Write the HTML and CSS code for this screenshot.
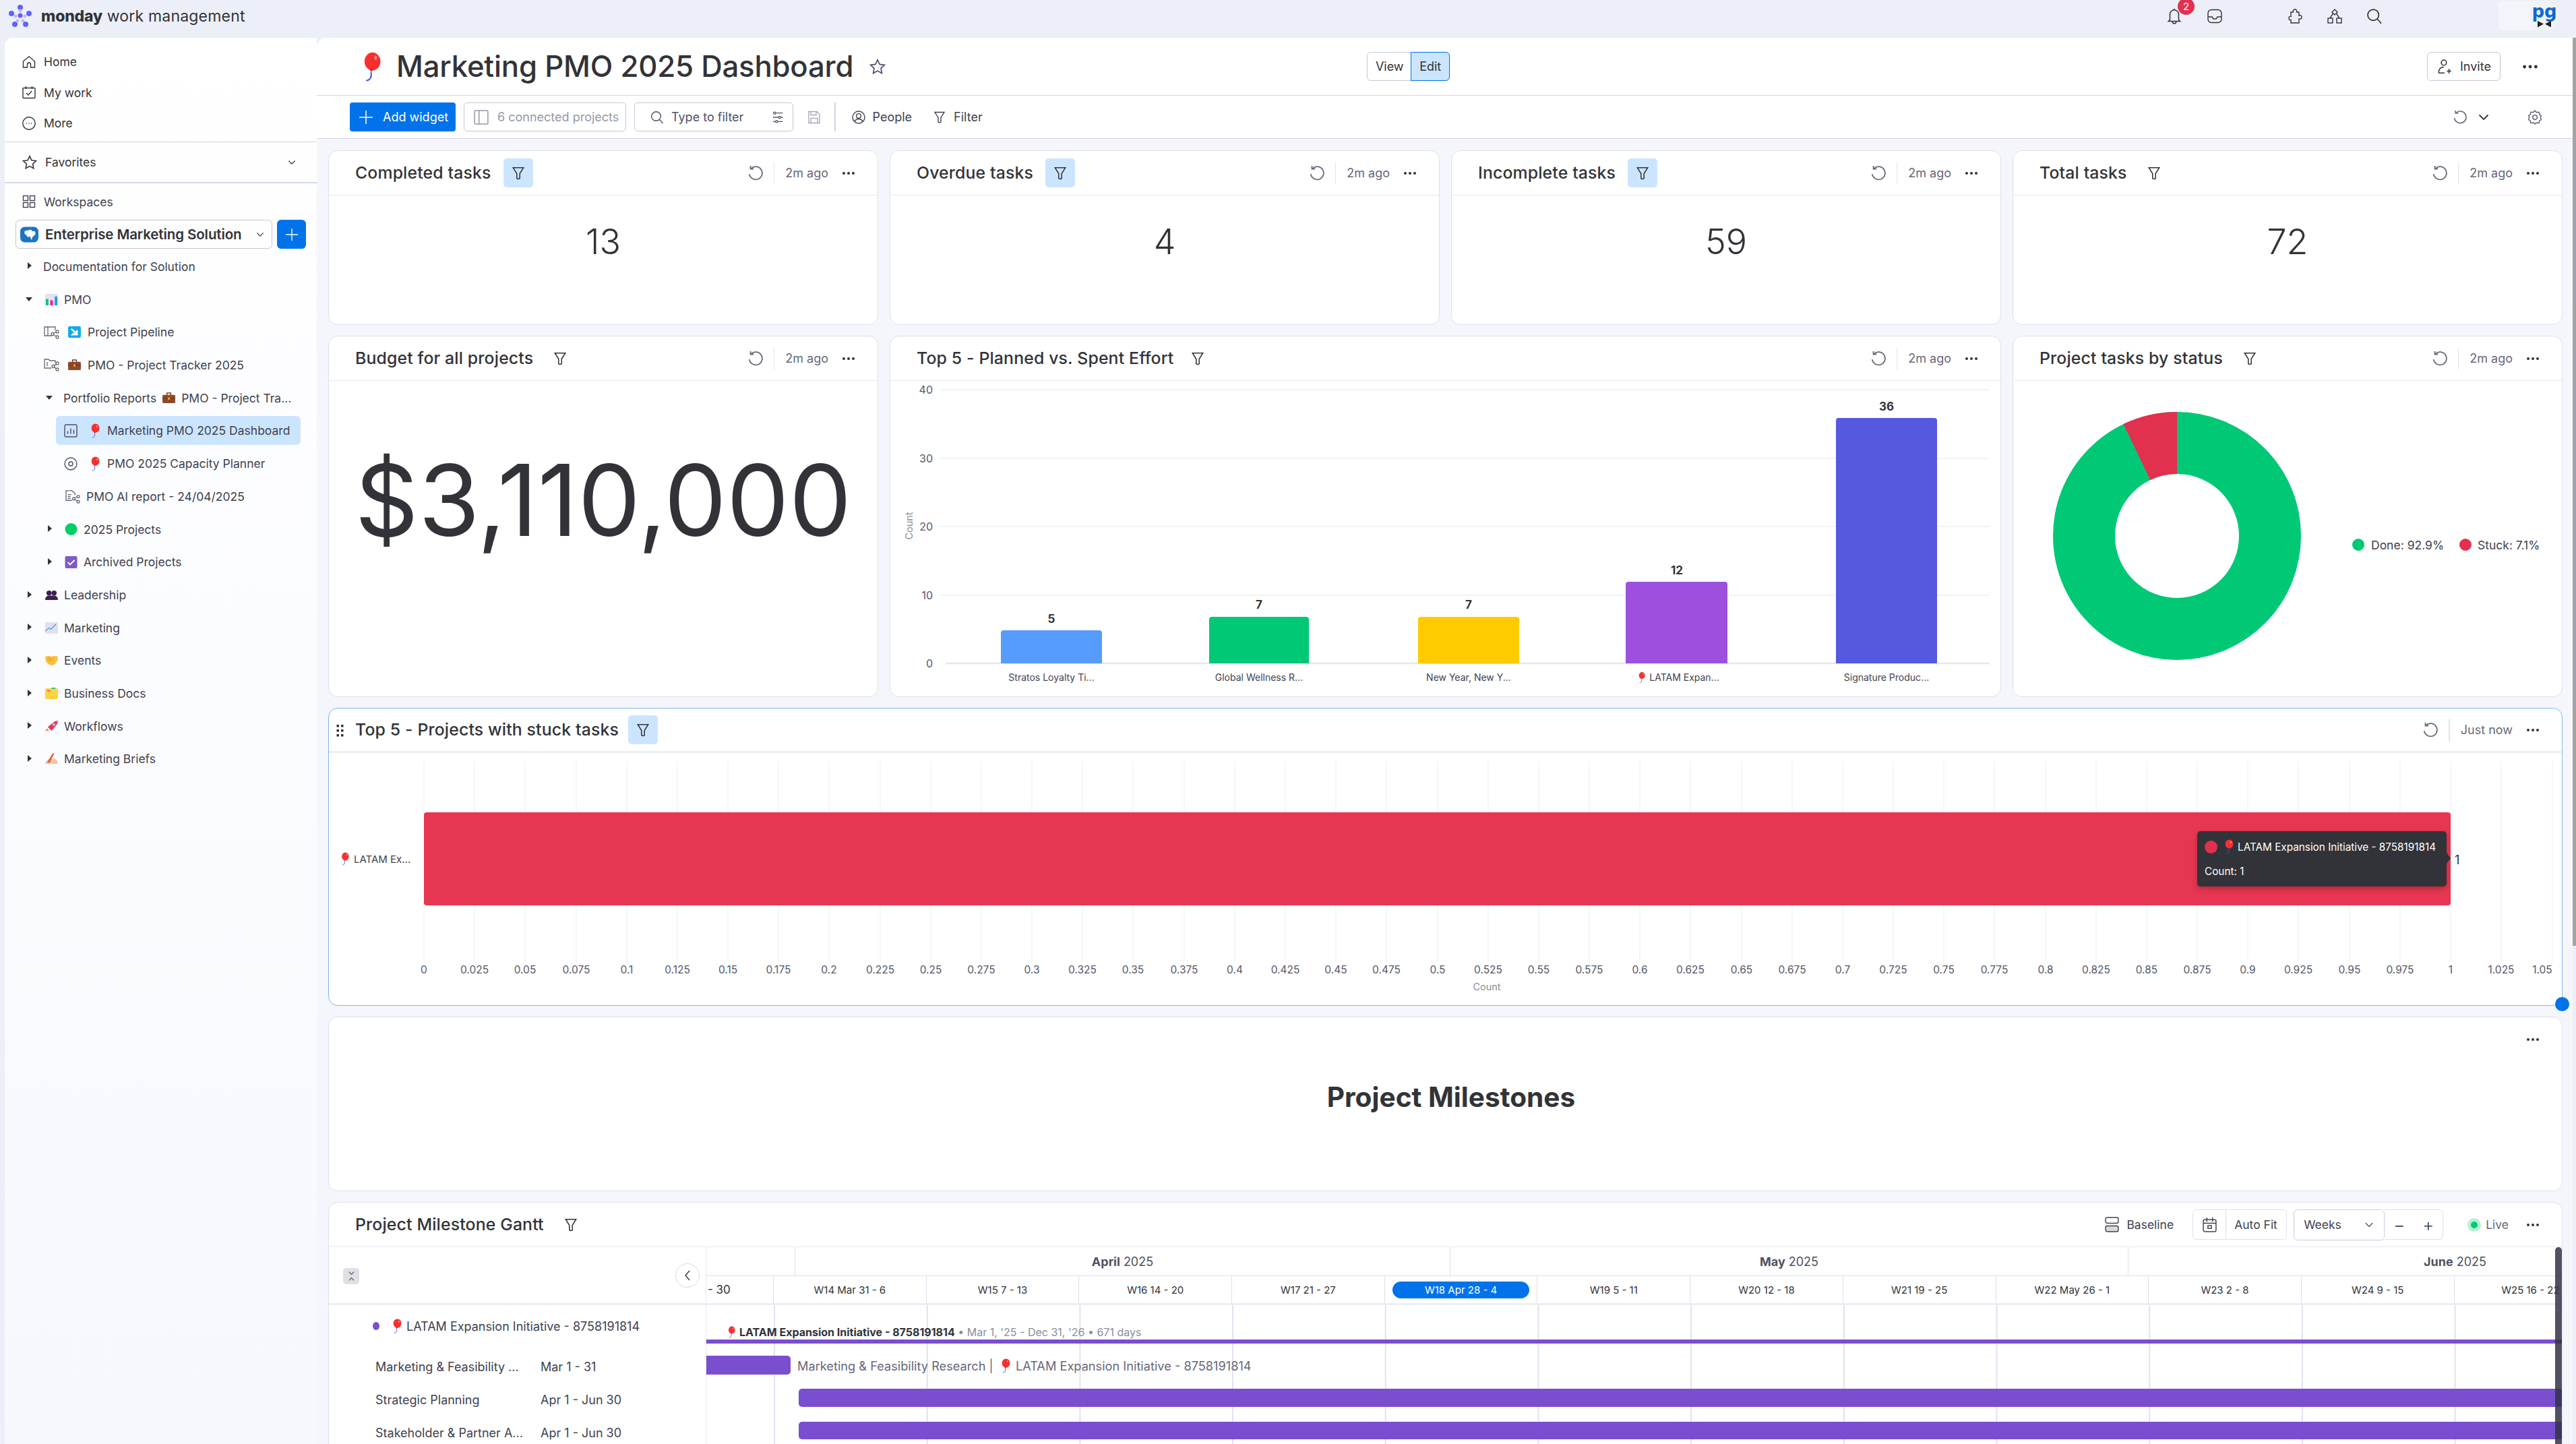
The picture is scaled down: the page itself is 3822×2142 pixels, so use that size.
FILE: index.html
```html
<!DOCTYPE html>
<html lang="en">
<head>
<meta charset="utf-8">
<title>Marketing PMO 2025 Dashboard</title>
<link rel="stylesheet" href="styles.css">
</head>
<body>
<svg class="defs" aria-hidden="true">
  <symbol id="i-home" viewBox="0 0 20 20"><path d="M1.5 9 10 1.8 18.500 9v9h-6v-4.500a2.500 2.500 0 0 0-5 0V18h-6z"/></symbol>
  <symbol id="i-work" viewBox="0 0 20 20"><rect x="1" y="3.500" width="18" height="15" rx="1"/><path d="M5.500 1v4M14.500 1v4M6 11l3 3 5-6"/></symbol>
  <symbol id="i-more" viewBox="0 0 20 20"><circle cx="10" cy="10" r="9.200"/><path d="M6 10h.8M9.600 10h.8M13.200 10h.8" stroke-width="1.800"/></symbol>
  <symbol id="i-star" viewBox="0 0 20 20"><path d="m10 1.500 2.600 5.500 6 .8-4.400 4.200 1.100 6L10 15.100 4.700 18l1.100-6L1.400 7.800l6-.8z"/></symbol>
  <symbol id="i-chev" viewBox="0 0 20 20"><path d="m3.500 6.500 6.500 6.500 6.500-6.500"/></symbol>
  <symbol id="i-grid" viewBox="0 0 20 20"><rect x="1.500" y="1.500" width="7" height="7"/><rect x="11.500" y="1.500" width="7" height="7"/><rect x="1.500" y="11.500" width="7" height="7"/><rect x="11.500" y="11.500" width="7" height="7"/></symbol>
  <symbol id="i-filter" viewBox="0 0 20 20"><path d="M3 2.500h14l-5 8v6.500q-2 1.600-4 0v-6.500z"/></symbol>
  <symbol id="i-refresh" viewBox="0 0 20 20"><path d="M4.500 4.200A8 8 0 1 1 2.300 11"/><path d="M3.800 .8v3.800h3.800"/></symbol>
  <symbol id="i-dots" viewBox="0 0 20 6"><circle cx="3" cy="3" r="2"/><circle cx="10" cy="3" r="2"/><circle cx="17" cy="3" r="2"/></symbol>
  <symbol id="i-search" viewBox="0 0 20 20"><circle cx="8.500" cy="8.500" r="6.800"/><path d="m13.500 13.500 5 5.500"/></symbol>
  <symbol id="i-sliders" viewBox="0 0 20 20"><path d="M6.500 3H18M2 3h1M2 10h9M15 10h3M2 17h4M10 17h8"/><circle cx="4.800" cy="3" r="1.800"/><circle cx="13" cy="10" r="1.800"/><circle cx="8" cy="17" r="1.800"/></symbol>
  <symbol id="i-save" viewBox="0 0 20 20"><path d="M2 1.500h12l4 4v13H2zM5 1.500v5h8v-5M5 18.500v-7h10v7"/></symbol>
  <symbol id="i-person" viewBox="0 0 20 20"><circle cx="10" cy="10" r="9"/><circle cx="10" cy="8" r="3.400"/><path d="M4 16.500q1.500-4 6-4t6 4"/></symbol>
  <symbol id="i-invite" viewBox="0 0 20 20"><circle cx="9" cy="4.500" r="3.500"/><path d="M2 18.500q0-8 7-8M13 16h6M16 13v6"/><path d="M2 18.500h8"/></symbol>
  <symbol id="i-gear" viewBox="0 0 20 20"><path stroke-linejoin="round" d="M10 1l2.200 2.400 3.300-.5.700 3.200L18.500 8l-1 2 1 3.200-2.300 1.500-.7 3-3.300-.4L10 19l-2.200-1.700-3.300.4-.7-3-2.300-1.500 1-3.200-1-2 2.300-1.900.7-3.200 3.300.5z"/><circle cx="10" cy="10" r="3"/></symbol>
  <symbol id="i-bell" viewBox="0 0 20 24"><path d="M10 1.500V3M4 17V9.500a6 6 0 0 1 12 0V17l2 2H2zM7.500 19.500a2.500 2.500 0 0 0 5 0"/></symbol>
  <symbol id="i-inbox" viewBox="0 0 24 24"><rect x="2" y="2.500" width="20" height="19" rx="5"/><path d="M2 13h6l2 3h4l2-3h6"/></symbol>
  <symbol id="i-puzzle" viewBox="0 0 24 24"><path d="M6 6h3.500q-1-4 2.500-4t2.500 4H18v5q4-1 4 2.500T18 16v6H6v-4.500q-3 .8-3-2.500t3-2.500z"/></symbol>
  <symbol id="i-hier" viewBox="0 0 24 24"><path d="m12 2 4 4-4 4-4-4zM9.500 8 5 15M14.500 8l4.500 7"/><rect x="2" y="15" width="7" height="7"/><rect x="15" y="15" width="7" height="7"/></symbol>
  <symbol id="i-plus" viewBox="0 0 20 20"><path d="M10 1v18M1 10h18"/></symbol>
  <symbol id="i-panel" viewBox="0 0 20 20"><rect x="1" y="1" width="18" height="18" rx="1"/><path d="M7 1v18"/></symbol>
  <symbol id="i-board-share" viewBox="0 0 24 20"><path d="M13 15H2V2h16v5M7 2v13"/><circle cx="14" cy="12.500" r="2"/><circle cx="21" cy="9" r="2"/><circle cx="21" cy="17" r="2"/><path d="m15.500 11.500 4-2M15.500 13.500l4 2.500"/></symbol>
  <symbol id="i-folder-share" viewBox="0 0 24 20"><path d="M12 15H2V2h6l2 2h8v3"/><path d="M6 6v6"/><circle cx="15" cy="12.500" r="2"/><circle cx="21" cy="8" r="2"/><circle cx="21" cy="17" r="2"/><path d="m16.500 11.500 3-2.500M16.500 13.500l3 2.500"/></symbol>
  <symbol id="i-dash" viewBox="0 0 20 20"><rect x="1" y="1" width="18" height="18" rx="2"/><path d="M5.500 14.500v-4M10 14.500v-8M14.500 14.500v-6"/></symbol>
  <symbol id="i-eye" viewBox="0 0 20 20"><circle cx="10" cy="10" r="9"/><circle cx="10" cy="10" r="3"/></symbol>
  <symbol id="i-doc-share" viewBox="0 0 24 22"><path d="M11 17H2V2h9l5 4v3M5 8h5M5 11h4M5 14h4"/><circle cx="14" cy="14.500" r="2"/><circle cx="21" cy="11" r="2"/><circle cx="21" cy="19" r="2"/><path d="m15.500 13.500 4-2M15.500 15.500l4 2.500"/></symbol>
  <symbol id="i-baseline" viewBox="0 0 20 22"><rect x="1" y="1" width="18" height="8" rx="2"/><rect x="1" y="13" width="18" height="8" rx="2" fill="#676879" fill-opacity=".25"/></symbol>
  <symbol id="i-cal" viewBox="0 0 20 22"><rect x="1" y="4" width="18" height="17" rx="2"/><path d="M6 1v6M14 1v6M1 9h18"/><rect x="7.500" y="12.500" width="5" height="4"/></symbol>
  <symbol id="balloon" viewBox="0 0 20 28"><ellipse cx="12" cy="9" rx="7.500" ry="8.500" fill="#f92f2f"/><ellipse cx="15" cy="5.500" rx="1.200" ry="2" fill="#ff8d8d"/><path d="M9.500 16.500h3l-1.800 2.500z" fill="#a51c3c"/><path d="M10.500 19q1 3-.3 5.500T6 27" fill="none" stroke="#3d50e0" stroke-width="1.200"/></symbol>
  <symbol id="e-brief" viewBox="0 0 20 18"><rect x="7" y="1" width="6" height="4" fill="none" stroke="#6f3a1e" stroke-width="1.500"/><rect y="4" width="20" height="13" rx="1.500" fill="#8b4a2b"/><rect y="9" width="20" height="1.200" fill="#6f3a1e"/><rect x="8.500" y="8" width="3" height="3.500" fill="#f4a623"/></symbol>
</svg>

<div class="app">
  <header class="topbar">
    <svg class="logo" viewBox="0 0 36 36">
      <circle cx="18" cy="5" r="4" fill="#6161ff"/><circle cx="5" cy="14" r="4" fill="#6161ff"/><circle cx="31" cy="14" r="4" fill="#6161ff"/><circle cx="10" cy="30" r="4" fill="#6161ff"/><circle cx="26" cy="30" r="4" fill="#6161ff"/><circle cx="18" cy="17" r="3.600" fill="#6161ff"/><circle cx="18" cy="10" r="2.400" fill="#b9b9ff"/><circle cx="11" cy="18" r="2.400" fill="#b9b9ff"/><circle cx="25" cy="18" r="2.400" fill="#b9b9ff"/><circle cx="14" cy="25" r="2.400" fill="#b9b9ff"/><circle cx="22" cy="25" r="2.400" fill="#b9b9ff"/>
    </svg>
    <div class="brand"><b>monday</b> work management</div>
    <div class="top-icons">
      <span class="bell"><svg class="ic ic-bell"><use href="#i-bell"/></svg><span class="badge">2</span></span>
      <svg class="ic ic-top"><use href="#i-inbox"/></svg>
      <svg class="ic ic-top gap-puzzle"><use href="#i-puzzle"/></svg>
      <svg class="ic ic-top"><use href="#i-hier"/></svg>
      <svg class="ic ic-top"><use href="#i-search"/></svg>
    </div>
    <div class="avatar-box">
      <svg class="avatar" viewBox="0 0 44 44">
        <circle cx="22" cy="22" r="22" fill="#f1f2f4"/>
        <text x="22" y="25" text-anchor="middle" class="avatar-text">pg</text>
        <path d="M12 30l9 4.500-9 5zM32 30l-9 4.500 9 5z" fill="#1f1f24"/>
      </svg>
    </div>
  </header>

  <div class="workspace">
    <aside class="sidebar">
      <nav class="nav">
        <a class="nav-row"><svg class="ic ic-nav"><use href="#i-home"/></svg>Home</a>
        <a class="nav-row"><svg class="ic ic-nav"><use href="#i-work"/></svg>My work</a>
        <a class="nav-row"><svg class="ic ic-nav"><use href="#i-more"/></svg>More</a>
      </nav>
      <div class="fav"><svg class="ic ic-star"><use href="#i-star"/></svg><span>Favorites</span><svg class="ic ic-chev fav-chev"><use href="#i-chev"/></svg></div>
      <div class="ws-label"><svg class="ic ic-nav"><use href="#i-grid"/></svg>Workspaces</div>
      <div class="ws-select">
        <div class="ws-box">
          <svg class="ws-logo" viewBox="0 0 28 24"><rect width="28" height="24" rx="7" fill="#1c74c4"/><circle cx="10" cy="9" r="3.500" fill="#fff"/><circle cx="15" cy="8" r="3.500" fill="#fff"/><circle cx="20" cy="10" r="3.500" fill="#fff"/><circle cx="13" cy="12" r="3.500" fill="#fff"/><circle cx="18" cy="13" r="2.800" fill="#fff"/><rect x="16" y="14" width="2.400" height="5" fill="#fff"/></svg>
          <b>Enterprise Marketing Solution</b>
          <svg class="ic ic-chev ws-chev"><use href="#i-chev"/></svg>
        </div>
        <button class="ws-add"><svg class="ic ic-add"><use href="#i-plus"/></svg></button>
      </div>
      <ul class="tree">
        <li class="t l0"><i class="caret"></i><span class="t-text t-doc">Documentation for Solution</span></li>
        <li class="t l0"><i class="caret open"></i><svg class="emoji" viewBox="0 0 20 18"><rect width="20" height="18" rx="2" fill="#e5e0ef"/><rect x="1" y="8" width="4" height="10" fill="#00c875"/><rect x="8" y="10" width="4" height="8" fill="#ff158a"/><rect x="15" y="4" width="4" height="14" fill="#1e9ee0"/></svg><span class="t-text">PMO</span></li>
        <li class="t l1"><svg class="ic ic-share"><use href="#i-board-share"/></svg><svg class="emoji" viewBox="0 0 20 18"><rect width="20" height="18" rx="2" fill="#12a9ec"/><path d="M5 4l9 8M14 6v7H7l2-2" stroke="#fff" stroke-width="2.500" fill="#fff"/></svg><span class="t-text">Project Pipeline</span></li>
        <li class="t l1"><svg class="ic ic-share"><use href="#i-folder-share"/></svg><svg class="emoji" viewBox="0 0 20 18"><use href="#e-brief"/></svg><span class="t-text">PMO - Project Tracker 2025</span></li>
        <li class="t l2"><i class="caret open"></i><span class="t-text t-portfolio">Portfolio Reports<svg class="emoji emoji-inline" viewBox="0 0 20 18"><use href="#e-brief"/></svg>PMO - Project Tra...</span></li>
        <li class="t l3 active"><svg class="ic ic-board"><use href="#i-dash"/></svg><svg class="mini-balloon"><use href="#balloon"/></svg><span>Marketing PMO 2025 Dashboard</span></li>
        <li class="t l3"><svg class="ic ic-board"><use href="#i-eye"/></svg><svg class="mini-balloon"><use href="#balloon"/></svg><span>PMO 2025 Capacity Planner</span></li>
        <li class="t l3"><svg class="ic ic-doc"><use href="#i-doc-share"/></svg><span>PMO AI report - 24/04/2025</span></li>
        <li class="t l2"><i class="caret"></i><svg class="emoji emoji-sub" viewBox="0 0 18 18"><circle cx="9" cy="9" r="9" fill="#00d166"/></svg><span class="t-text">2025 Projects</span></li>
        <li class="t l2"><i class="caret"></i><svg class="emoji emoji-sub" viewBox="0 0 18 18"><rect width="18" height="18" rx="2" fill="#7c5acb"/><path d="m4 9 3.500 3.500L14 6" stroke="#fff" stroke-width="1.800" fill="none"/></svg><span class="t-text">Archived Projects</span></li>
        <li class="t l0"><i class="caret"></i><svg class="emoji" viewBox="0 0 20 18"><circle cx="6" cy="6" r="4" fill="#3c1e4f"/><circle cx="14" cy="6" r="4" fill="#3c1e4f"/><path d="M0 17q0-7 6-7h8q6 0 6 7z" fill="#3c1e4f"/></svg><span class="t-text">Leadership</span></li>
        <li class="t l0"><i class="caret"></i><svg class="emoji" viewBox="0 0 20 18"><rect width="20" height="18" rx="1" fill="#e3dfee"/><path d="M0 14l6-5 3 2 8-8" stroke="#3aa0ef" stroke-width="1.400" fill="none"/></svg><span class="t-text">Marketing</span></li>
        <li class="t l0"><i class="caret"></i><svg class="emoji" viewBox="0 0 20 18"><path d="M0 3l6-1 4 1 4-1 6 1-1 7q-3 6-9 7-6-1-9-7z" fill="#fbbf3d"/><path d="M5 8l4 3M8 6l5 4M4 5l4 1" stroke="#d58a17" fill="none"/></svg><span class="t-text">Events</span></li>
        <li class="t l0"><i class="caret"></i><svg class="emoji" viewBox="0 0 20 18"><rect y="1" width="20" height="17" rx="2" fill="#fed43e"/><rect x="3" y="4" width="5" height="1.500" fill="#e44258"/><rect x="10" y="0" width="6" height="2" fill="#20c0a0"/></svg><span class="t-text">Business Docs</span></li>
        <li class="t l0"><i class="caret"></i><svg class="emoji" viewBox="0 0 20 18"><path d="M4 10 15 1l5-1-1 5-9 11z" fill="#e9385a"/><circle cx="13.500" cy="6" r="2" fill="#9fd8f2"/><path d="M0 17l3-5 3 3z" fill="#f88b3a"/></svg><span class="t-text">Workflows</span></li>
        <li class="t l0"><i class="caret"></i><svg class="emoji" viewBox="0 0 20 18"><path d="M0 17q2-8 9-8h6q5 2 5 8z" fill="#f0c4a8"/><path d="M3 15 12 0l2 1-7 14z" fill="#f4562a"/></svg><span class="t-text">Marketing Briefs</span></li>
      </ul>
    </aside>

    <main class="main">
      <div class="page-head">
        <svg class="title-balloon"><use href="#balloon"/></svg>
        <h1>Marketing PMO 2025 Dashboard</h1>
        <svg class="ic ic-title-star"><use href="#i-star"/></svg>
        <div class="seg"><span class="seg-view">View</span><span class="seg-edit">Edit</span></div>
        <button class="invite"><svg class="ic ic-invite"><use href="#i-invite"/></svg>Invite</button>
        <svg class="ic-dots-lg"><use href="#i-dots"/></svg>
      </div>
      <div class="toolbar">
        <button class="add-widget"><svg class="ic ic-addw"><use href="#i-plus"/></svg>Add widget</button>
        <div class="tb-box tb-conn"><svg class="ic ic-panel"><use href="#i-panel"/></svg>6 connected projects</div>
        <div class="tb-box tb-search"><svg class="ic ic-tool"><use href="#i-search"/></svg><span>Type to filter</span><svg class="ic ic-sl"><use href="#i-sliders"/></svg></div>
        <svg class="ic ic-tsave"><use href="#i-save"/></svg>
        <span class="tb-sep"></span>
        <span class="tb-btn"><svg class="ic ic-tool"><use href="#i-person"/></svg>People</span>
        <span class="tb-btn"><svg class="ic ic-tool"><use href="#i-filter"/></svg>Filter</span>
        <span class="tb-right"><svg class="ic ic-tool ic-grey"><use href="#i-refresh"/></svg><svg class="ic ic-tchev"><use href="#i-chev"/></svg></span>
        <svg class="ic ic-tool ic-grey tb-gear"><use href="#i-gear"/></svg>
      </div>

      <div class="dash">
        <section class="card c1">
          <header class="card-head"><h2>Completed tasks</h2><span class="chip on"><svg class="ic ic-filter"><use href="#i-filter"/></svg></span><div class="meta"><svg class="ic ic-ref"><use href="#i-refresh"/></svg><i class="sep"></i><span class="ago">2m ago</span><svg class="ic-dots"><use href="#i-dots"/></svg></div></header>
          <div class="num">13</div>
        </section>
        <section class="card c1">
          <header class="card-head"><h2>Overdue tasks</h2><span class="chip on"><svg class="ic ic-filter"><use href="#i-filter"/></svg></span><div class="meta"><svg class="ic ic-ref"><use href="#i-refresh"/></svg><i class="sep"></i><span class="ago">2m ago</span><svg class="ic-dots"><use href="#i-dots"/></svg></div></header>
          <div class="num">4</div>
        </section>
        <section class="card c1">
          <header class="card-head"><h2>Incomplete tasks</h2><span class="chip on"><svg class="ic ic-filter"><use href="#i-filter"/></svg></span><div class="meta"><svg class="ic ic-ref"><use href="#i-refresh"/></svg><i class="sep"></i><span class="ago">2m ago</span><svg class="ic-dots"><use href="#i-dots"/></svg></div></header>
          <div class="num">59</div>
        </section>
        <section class="card c1">
          <header class="card-head"><h2>Total tasks</h2><span class="chip"><svg class="ic ic-filter"><use href="#i-filter"/></svg></span><div class="meta"><svg class="ic ic-ref"><use href="#i-refresh"/></svg><i class="sep"></i><span class="ago">2m ago</span><svg class="ic-dots"><use href="#i-dots"/></svg></div></header>
          <div class="num">72</div>
        </section>

        <section class="card">
          <header class="card-head"><h2>Budget for all projects</h2><span class="chip"><svg class="ic ic-filter"><use href="#i-filter"/></svg></span><div class="meta"><svg class="ic ic-ref"><use href="#i-refresh"/></svg><i class="sep"></i><span class="ago">2m ago</span><svg class="ic-dots"><use href="#i-dots"/></svg></div></header>
          <div class="budget">$3,110,000</div>
        </section>
        <section class="card span2">
          <header class="card-head"><h2>Top 5 - Planned vs. Spent Effort</h2><span class="chip chip-tight"><svg class="ic ic-filter"><use href="#i-filter"/></svg></span><div class="meta"><svg class="ic ic-ref"><use href="#i-refresh"/></svg><i class="sep"></i><span class="ago">2m ago</span><svg class="ic-dots"><use href="#i-dots"/></svg></div></header>
          <svg class="chart" width="1647" height="467" viewBox="1321 566 1647 467">
            <g class="grid-l">
              <path d="M1394 579H2952M1394 681H2952M1394 782H2952M1394 884H2952"/>
            </g>
            <path class="axis" d="M1403 985H2952"/>
            <g class="t-y"><text x="1384" y="585">40</text><text x="1384" y="687">30</text><text x="1384" y="788">20</text><text x="1384" y="890">10</text><text x="1384" y="991">0</text></g>
            <text class="t-count" transform="translate(1354 781) rotate(-90)">Count</text>
            <path d="M1485 985V940q0-4 4-4H1631q4 0 4 4V985z" fill="#579bfc"/>
            <path d="M1794 985V920q0-4 4-4H1938q4 0 4 4V985z" fill="#00c875"/>
            <path d="M2104 985V920q0-4 4-4H2250q4 0 4 4V985z" fill="#ffcb00"/>
            <path d="M2412 985V868q0-4 4-4H2559q4 0 4 4V985z" fill="#9d50dd"/>
            <path d="M2724 985V625q0-4 4-4H2870q4 0 4 4V985z" fill="#5559df"/>
            <g class="t-val"><text x="1560" y="925">5</text><text x="1868" y="904">7</text><text x="2179" y="904">7</text><text x="2488" y="853">12</text><text x="2799" y="610">36</text></g>
            <g class="t-x"><text x="1560" y="1011">Stratos Loyalty Ti...</text><text x="1868" y="1011">Global Wellness R...</text><text x="2179" y="1011">New Year, New Y...</text><text x="2499" y="1011">LATAM Expan...</text><text x="2799" y="1011">Signature Produc...</text></g>
            <use href="#balloon" x="2429" y="997" width="12" height="18"/>
          </svg>
        </section>
        <section class="card">
          <header class="card-head"><h2>Project tasks by status</h2><span class="chip"><svg class="ic ic-filter"><use href="#i-filter"/></svg></span><div class="meta"><svg class="ic ic-ref"><use href="#i-refresh"/></svg><i class="sep"></i><span class="ago">2m ago</span><svg class="ic-dots"><use href="#i-dots"/></svg></div></header>
          <svg class="chart" width="814" height="467" viewBox="2987 566 814 467">
            <circle cx="3230" cy="796" r="138" fill="none" stroke="#00c875" stroke-width="92"/>
            <path d="M3230 612A184 184 0 0 0 3150.500 630L3190.500 713A92 92 0 0 1 3230 704z" fill="#e2304f"/>
            <circle cx="3499" cy="809" r="9" fill="#00c875"/>
            <text x="3518" y="816" class="t-leg">Done: 92.9%</text>
            <circle cx="3658" cy="809" r="9" fill="#e2304f"/>
            <text x="3676" y="816" class="t-leg">Stuck: 7.1%</text>
          </svg>
        </section>

        <section class="card span4 selected">
          <header class="card-head head-drag">
            <svg class="drag" viewBox="0 0 10 18"><g fill="#323338"><rect width="3.500" height="3.500"/><rect x="6.500" width="3.500" height="3.500"/><rect y="7" width="3.500" height="3.500"/><rect x="6.500" y="7" width="3.500" height="3.500"/><rect y="14" width="3.500" height="3.500"/><rect x="6.500" y="14" width="3.500" height="3.500"/></g></svg>
            <h2>Top 5 - Projects with stuck tasks</h2><span class="chip on chip-tight"><svg class="ic ic-filter"><use href="#i-filter"/></svg></span><div class="meta"><svg class="ic ic-ref"><use href="#i-refresh"/></svg><i class="sep"></i><span class="ago">Just now</span><svg class="ic-dots"><use href="#i-dots"/></svg></div>
          </header>
          <svg class="chart" width="3313" height="375" viewBox="488 1117 3313 375">
            <path class="grid-v" d="M629 1129V1427M704 1129V1427M779 1129V1427M855 1129V1427M930 1129V1427M1005 1129V1427M1080 1129V1427M1155 1129V1427M1230 1129V1427M1306 1129V1427M1381 1129V1427M1456 1129V1427M1531 1129V1427M1606 1129V1427M1681 1129V1427M1757 1129V1427M1832 1129V1427M1907 1129V1427M1982 1129V1427M2057 1129V1427M2133 1129V1427M2208 1129V1427M2283 1129V1427M2358 1129V1427M2433 1129V1427M2508 1129V1427M2584 1129V1427M2659 1129V1427M2734 1129V1427M2809 1129V1427M2884 1129V1427M2959 1129V1427M3035 1129V1427M3110 1129V1427M3185 1129V1427M3260 1129V1427M3335 1129V1427M3410 1129V1427M3486 1129V1427M3561 1129V1427M3636 1129V1427M3711 1129V1427M3787 1129V1427"/>
            <rect x="629" y="1205" width="3007" height="138" rx="4" fill="#e73651"/>
            <use href="#balloon" x="504" y="1264" width="14" height="20"/>
            <text x="525" y="1280" class="t-ylab">LATAM Ex...</text>
            <text x="3642" y="1282" class="t-one">1</text>
            <g class="t-tick">
              <text x="629" y="1444">0</text><text x="704" y="1444">0.025</text><text x="779" y="1444">0.05</text><text x="855" y="1444">0.075</text><text x="930" y="1444">0.1</text><text x="1005" y="1444">0.125</text><text x="1080" y="1444">0.15</text><text x="1155" y="1444">0.175</text><text x="1230" y="1444">0.2</text><text x="1306" y="1444">0.225</text><text x="1381" y="1444">0.25</text><text x="1456" y="1444">0.275</text><text x="1531" y="1444">0.3</text><text x="1606" y="1444">0.325</text><text x="1681" y="1444">0.35</text><text x="1757" y="1444">0.375</text><text x="1832" y="1444">0.4</text><text x="1907" y="1444">0.425</text><text x="1982" y="1444">0.45</text><text x="2057" y="1444">0.475</text><text x="2133" y="1444">0.5</text><text x="2208" y="1444">0.525</text><text x="2283" y="1444">0.55</text><text x="2358" y="1444">0.575</text><text x="2433" y="1444">0.6</text><text x="2508" y="1444">0.625</text><text x="2584" y="1444">0.65</text><text x="2659" y="1444">0.675</text><text x="2734" y="1444">0.7</text><text x="2809" y="1444">0.725</text><text x="2884" y="1444">0.75</text><text x="2959" y="1444">0.775</text><text x="3035" y="1444">0.8</text><text x="3110" y="1444">0.825</text><text x="3185" y="1444">0.85</text><text x="3260" y="1444">0.875</text><text x="3335" y="1444">0.9</text><text x="3410" y="1444">0.925</text><text x="3486" y="1444">0.95</text><text x="3561" y="1444">0.975</text><text x="3636" y="1444">1</text><text x="3711" y="1444">1.025</text><text x="3772" y="1444">1.05</text>
              <text x="2206" y="1469" class="t-xcount">Count</text>
            </g>
          </svg>
          <div class="tooltip">
            <div class="tt-line"><i class="tt-dot"></i><svg class="tt-balloon"><use href="#balloon"/></svg>LATAM Expansion Initiative - 8758191814</div>
            <div class="tt-count">Count: 1</div>
          </div>
          <i class="resize"></i>
        </section>

        <section class="card span4 milestones">
          <svg class="ms-dots"><use href="#i-dots"/></svg>
          <h3>Project Milestones</h3>
        </section>

        <section class="card span4 gantt">
          <header class="card-head gantt-head">
            <h2>Project Milestone Gantt</h2><span class="chip"><svg class="ic ic-filter"><use href="#i-filter"/></svg></span>
            <div class="g-tools">
              <span class="g-base"><svg class="ic ic-base"><use href="#i-baseline"/></svg>Baseline</span>
              <span class="g-box g-fit"><span class="g-cal"><svg class="ic ic-base"><use href="#i-cal"/></svg></span><span class="g-fit-t">Auto Fit</span></span>
              <span class="g-zoom"><span class="g-weeks">Weeks<svg class="ic ic-wchev"><use href="#i-chev"/></svg></span><span class="g-pm"><i>−</i><i>+</i></span></span>
              <span class="g-live"><i></i>Live</span>
              <svg class="ic-dots"><use href="#i-dots"/></svg>
            </div>
          </header>
          <div class="g-body">
            <div class="g-left">
              <div class="g-left-head">
                <span class="g-collapse"><svg viewBox="0 0 12 20"><path d="m2 3 4 4 4-4M2 17l4-4 4 4"/></svg></span>
                <span class="g-back"><svg viewBox="0 0 12 20"><path d="M9 3 3 10l6 7"/></svg></span>
              </div>
              <div class="g-parent"><i></i><svg class="tt-balloon g-balloon"><use href="#balloon"/></svg>LATAM Expansion Initiative - 8758191814</div>
              <div class="g-item"><span>Marketing &amp; Feasibility ...</span><span>Mar 1 - 31</span></div>
              <div class="g-item"><span>Strategic Planning</span><span>Apr 1 - Jun 30</span></div>
              <div class="g-item"><span>Stakeholder &amp; Partner A...</span><span>Apr 1 - Jun 30</span></div>
            </div>
            <div class="g-right">
              <div class="g-months">
                <span></span><span><b>April</b> 2025</span><span><b>May</b> 2025</span><span><b>June</b> 2025</span>
              </div>
              <div class="g-weeks-row">
                <span class="w-first">- 30</span><span>W14 Mar 31 - 6</span><span>W15 7 - 13</span><span>W16 14 - 20</span><span>W17 21 - 27</span><span class="w-now"><em>W18 Apr 28 - 4</em></span><span>W19 5 - 11</span><span>W20 12 - 18</span><span>W21 19 - 25</span><span>W22 May 26 - 1</span><span>W23 2 - 8</span><span>W24 9 - 15</span><span class="w-last">W25 16 - 22</span>
              </div>
              <div class="g-rows">
                <div class="r-sum">
                  <div class="r-sum-label"><svg class="tt-balloon"><use href="#balloon"/></svg><b>LATAM Expansion Initiative - 8758191814</b><span> • Mar 1, '25 - Dec 31, '26 • 671 days</span></div>
                  <div class="r-sum-bar"></div>
                </div>
                <div class="r-task"><div class="bar bar-a"></div><span class="bar-label">Marketing &amp; Feasibility Research | <svg class="tt-balloon"><use href="#balloon"/></svg> LATAM Expansion Initiative - 8758191814</span></div>
                <div class="bar bar-b"></div>
                <div class="bar bar-c"></div>
              </div>
            </div>
            <i class="g-scroll"></i>
          </div>
        </section>
      </div>
    </main>
  </div>
  <i class="page-scroll"></i>
</div>
</body>
</html>
```

FILE: styles.css
```css
* { box-sizing: border-box; }
html, body { margin: 0; padding: 0; }
body {
  width: 3822px; height: 2142px; overflow: hidden;
  font-family: Inter, "Liberation Sans", sans-serif;
  color: #323338; background: #eceff8;
}
.defs { position: absolute; width: 0; height: 0; }
.app { position: relative; width: 3822px; height: 2142px; display: flex; flex-direction: column; overflow: hidden; }
svg text { font-family: Inter, "Liberation Sans", sans-serif; }
h1, h2, h3 { margin: 0; font-weight: 500; }
button { font-family: inherit; }
i, em { font-style: normal; }
.ic { fill: none; stroke: currentColor; stroke-width: 1.4; flex: none; }

/* top bar */
.topbar { height: 56px; flex: none; display: flex; align-items: center; padding-left: 12px; }
.logo { width: 36px; height: 36px; margin-right: 13px; flex: none; margin-top: -8px; }
.brand { font-size: 23px; color: #323338; font-weight: 400; margin-top: -8px; letter-spacing: .2px; }
.brand b { font-weight: 800; letter-spacing: -.2px; }
.top-icons { margin-left: auto; display: flex; align-items: center; margin-top: -8px; }
.bell { position: relative; display: flex; margin-right: 37px; }
.ic-bell { width: 22px; height: 26px; }
.badge { position: absolute; left: 16px; top: -14px; width: 25px; height: 25px; border-radius: 50%; background: #e2304f; color: #fff; font-size: 15px; display: flex; align-items: center; justify-content: center; }
.ic-top { width: 24px; height: 24px; margin-right: 35px; }
.gap-puzzle { margin-left: 60px; }
.top-icons .ic-top:last-child { margin-right: 172px; }
.avatar-box { width: 90px; height: 44px; background: #f3f5fb; margin-right: 25px; margin-top: -10px; display: flex; justify-content: flex-end; border-radius: 6px 22px 22px 6px; }
.avatar { width: 44px; height: 44px; }
.avatar-text { font-family: "DejaVu Sans", sans-serif; font-weight: 700; font-size: 26px; fill: #0a69d4; }

/* layout */
.workspace { flex: 1; display: flex; min-height: 0; padding-left: 7px; }
.sidebar { width: 463px; flex: none; background: linear-gradient(#fff, #f6f8fe); border-radius: 12px 0 0 0; color: #40424f; font-size: 17.500px; }

/* sidebar */
.nav { padding-top: 13px; border-bottom: 1px solid #d0d4e4; height: 155px; }
.nav-row { display: flex; align-items: center; height: 45.500px; padding-left: 26px; gap: 12px; color: #323338; }
.ic-nav { width: 20px; height: 20px; }
.fav { display: flex; align-items: center; height: 61px; padding-left: 26px; border-bottom: 2.500px solid #d5d9ea; gap: 12px; color: #323338; }
.ic-star { width: 22px; height: 22px; }
.fav-chev { margin-left: auto; margin-right: 30px; }
.ic-chev { width: 14px; height: 14px; stroke-width: 1.800; }
.ws-label { display: flex; align-items: center; height: 54px; padding-left: 26px; gap: 12px; }
.ws-select { display: flex; gap: 7px; margin-left: 16px; height: 43px; }
.ws-box { width: 381px; border: 1px solid #c5c7d4; border-radius: 6px; display: flex; align-items: center; padding-left: 6px; gap: 10px; }
.ws-logo { width: 27px; height: 24px; flex: none; }
.ws-box b { font-size: 20.500px; font-weight: 600; color: #323338; white-space: nowrap; letter-spacing: -.1px; }
.ws-chev { margin-left: auto; margin-right: 10px; }
.ws-add { width: 43px; height: 43px; border: 0; border-radius: 6px; background: #0073ea; color: #fff; display: flex; align-items: center; justify-content: center; padding: 0; }
.ic-add { width: 20px; height: 20px; }
.tree { list-style: none; margin: 2px 0 0; padding: 0; }
.t { height: 48.700px; display: flex; align-items: center; white-space: nowrap; }
.l0 { padding-left: 30px; }
.l1 { padding-left: 57px; }
.l2 { padding-left: 60px; }
.l3 { padding-left: 81px; }
.caret { width: 14px; height: 14px; flex: none; position: relative; display: block; }
.caret::before { content: ""; position: absolute; left: 4px; top: 1px; border-left: 6px solid #323338; border-top: 5.500px solid transparent; border-bottom: 5.500px solid transparent; }
.caret.open::before { left: 1px; top: 4px; border-top: 6px solid #323338; border-left: 5.500px solid transparent; border-right: 5.500px solid transparent; border-bottom: 0; }
.emoji { width: 19px; height: 17px; flex: none; margin-left: 16px; margin-right: 9px; }
.t-doc { margin-left: 13px; }
.t-portfolio { margin-left: 13px; display: flex; align-items: center; }
.emoji-inline { margin: 0 9px; }
.emoji-sub { width: 19px; height: 18px; margin-left: 15px; margin-right: 9px; }
.ic-share { width: 24px; height: 20px; margin-right: 13px; stroke-width: 1.300; color: #676879; }
.l1 .emoji { margin-left: 0; margin-right: 10px; }
.ic-board { width: 20px; height: 20px; color: #4b4e69; margin-left: 7px; margin-right: 17px; }
.mini-balloon { width: 16px; height: 22px; margin-right: 11px; flex: none; }
.ic-doc { width: 23px; height: 21px; margin-left: 8px; margin-right: 9px; color: #676879; }
.active { background: #cce5ff; border-radius: 6px; width: 363px; margin-left: 76px; padding-left: 5px; height: 43px; margin-top: 3px; margin-bottom: 3px; }

/* main */
.main { flex: none; width: 3347px; background: #f5f6fb; border-radius: 14px 0 0 0; overflow: hidden; display: flex; flex-direction: column; }
.page-head { height: 86px; flex: none; background: #fff; border-bottom: 1.500px solid #d0d4e4; display: flex; align-items: center; padding-left: 63px; }
.title-balloon { width: 33px; height: 44px; margin-right: 22px; flex: none; }
h1 { font-size: 43.700px; font-weight: 500; color: #323338; white-space: nowrap; letter-spacing: -.2px; }
.ic-title-star { width: 24px; height: 24px; margin-left: 24px; color: #4b4e69; }
.seg { margin-left: 714px; display: flex; height: 43px; font-size: 18px; border: 1px solid #c5c7d4; border-radius: 6px; }
.seg-view { width: 65px; display: flex; align-items: center; justify-content: center; }
.seg-edit { width: 58px; margin: -1px; background: #cce5ff; border: 1px solid #0073ea; border-radius: 0 6px 6px 0; display: flex; align-items: center; justify-content: center; }
.invite { margin-left: auto; width: 109px; height: 43px; background: #fff; border: 1px solid #c5c7d4; border-radius: 6px; display: flex; align-items: center; gap: 12px; padding: 0 0 0 14px; font-size: 18px; color: #323338; }
.ic-invite { width: 22px; height: 22px; }
.ic-dots-lg { width: 24px; height: 8px; margin: 0 51px 0 32px; fill: #323338; flex: none; }
.toolbar { height: 64px; flex: none; background: #fff; border-bottom: 1.500px solid #d0d4e4; display: flex; align-items: center; padding-left: 49px; font-size: 18px; }
.add-widget { width: 157px; height: 43px; border: 0; border-radius: 4px; background: #0073ea; color: #fff; display: flex; align-items: center; gap: 14px; padding: 0 0 0 13px; font-size: 18px; white-space: nowrap; }
.ic-addw { width: 22px; height: 22px; }
.tb-box { height: 43px; display: flex; align-items: center; border: 1px solid #c5c7d4; border-radius: 5px; white-space: nowrap; }
.tb-conn { width: 241px; margin-left: 12px; padding-left: 14px; gap: 13px; color: #9699a6; }
.ic-panel { width: 22px; height: 22px; }
.tb-search { width: 236px; margin-left: 12px; padding-left: 23px; gap: 11px; color: #505364; }
.ic-tool { width: 20px; height: 20px; }
.ic-sl { width: 18px; height: 20px; margin-left: auto; margin-right: 13px; }
.ic-tsave { width: 20px; height: 22px; margin-left: 21px; color: #a9acba; }
.tb-sep { width: 1.500px; height: 43px; background: #d0d4e4; margin: 0 24px 0 20px; }
.tb-btn { display: flex; align-items: center; gap: 11px; margin-right: 31px; color: #40424f; }
.tb-right { margin-left: auto; display: flex; align-items: center; gap: 14px; margin-right: 55px; }
.ic-grey { color: #676879; }
.ic-tool.ic-grey { width: 22px; height: 22px; }
.ic-tchev { width: 20px; height: 20px; stroke-width: 1.800; }
.tb-gear { margin-right: 45px; }

/* dashboard */
.dash { display: grid; grid-template-columns: repeat(4, 816px); grid-template-rows: 259px 536px 442px 259px 400px; column-gap: 17px; row-gap: 16px; padding: 17px 0 0 17px; }
.card { position: relative; background: #fff; border: 1px solid #dde0ee; border-radius: 14px; display: flex; flex-direction: column; min-width: 0; }
.span2 { grid-column: span 2; }
.span4 { grid-column: span 4; }
.card-head { height: 66px; flex: none; display: flex; align-items: center; padding: 0 33px 0 39px; border-bottom: 1.500px solid #e6e9f3; }
.card-head h2 { font-size: 24.800px; font-weight: 500; white-space: nowrap; letter-spacing: .15px; margin-top: -2px; }
.chip { width: 44px; height: 43px; margin-left: 18px; border-radius: 5px; display: flex; align-items: center; justify-content: center; color: #323338; }
.chip-tight { margin-left: 14px; }
.chip.on { background: #cce5ff; }
.ic-filter { width: 22px; height: 22px; }
.meta { margin-left: auto; display: flex; align-items: center; color: #676879; font-size: 18px; }
.ic-ref { width: 24px; height: 24px; stroke-width: 1.500; }
.sep { width: 1.500px; height: 32px; background: #e0e3ef; margin: 0 16px 0 15px; }
.ago { white-space: nowrap; margin-right: 20px; }
.ic-dots { width: 20px; height: 6px; fill: #323338; flex: none; }
.num { text-align: center; font-size: 52px; line-height: 60px; padding-top: 39px; color: #323338; font-weight: 300; }
.budget { text-align: center; font-size: 147px; line-height: 180px; padding-top: 87px; color: #323338; font-weight: 400; white-space: nowrap; }
.chart { display: block; flex: none; }
.grid-l path { stroke: #f2f3f8; stroke-width: 2; fill: none; }
.axis { stroke: #e4e6f0; stroke-width: 2.500; fill: none; }
.t-y text { font-size: 16px; fill: #555869; text-anchor: end; }
.t-count { font-size: 14.500px; fill: #8b8d9a; text-anchor: middle; }
.t-val text { font-size: 17px; font-weight: 700; fill: #323338; text-anchor: middle; }
.t-x text { font-size: 14px; fill: #40424f; text-anchor: middle; }
.t-leg { font-size: 17.500px; fill: #40424f; }
.grid-v { stroke: #f2f3f8; stroke-width: 1.500; fill: none; }
.t-ylab { font-size: 15px; fill: #40424f; }
.t-one { font-size: 18px; fill: #323338; }
.t-tick text { font-size: 15.500px; fill: #555869; text-anchor: middle; }
.t-tick .t-xcount { font-size: 14.500px; fill: #8b8d9a; }

.selected { border: 1.500px solid #7cb7f7; }
.selected .card-head { border-bottom: 3px solid #eef0f6; }
.head-drag { padding-left: 39px; position: relative; }
.drag { position: absolute; left: 11px; top: 24px; width: 11px; height: 18px; }
.tooltip { position: absolute; left: 2772px; top: 182px; width: 370px; height: 82px; background: #323338; border-radius: 5px; color: #fff; font-size: 15.300px; box-shadow: 0 3px 8px rgba(0,0,0,.25); padding: 12px 11px; white-space: nowrap; }
.tooltip::after { content: ""; position: absolute; right: -6px; top: 32px; border-left: 6px solid #323338; border-top: 8px solid transparent; border-bottom: 8px solid transparent; }
.tt-line { display: flex; align-items: center; height: 22px; }
.tt-dot { width: 19px; height: 19px; border-radius: 50%; background: #e2304f; flex: none; margin-right: 8px; }
.tt-balloon { width: 16px; height: 22px; flex: none; margin-right: 6px; }
.tt-count { margin-top: 16px; }
.resize { position: absolute; right: -11px; bottom: -9px; width: 21px; height: 21px; border-radius: 50%; background: #0073ea; }

.milestones { align-items: center; justify-content: center; padding-left: 17px; }
.milestones h3 { font-size: 40.600px; font-weight: 700; color: #323338; margin-bottom: 20px; }
.ms-dots { position: absolute; right: 33px; top: 30px; width: 20px; height: 6px; fill: #323338; }

/* gantt */
.gantt { overflow: hidden; }
.gantt-head { padding-right: 33px; }
.g-tools { margin-left: auto; display: flex; align-items: center; font-size: 17.500px; color: #40424f; }
.g-base { display: flex; align-items: center; gap: 11px; margin-right: 28px; white-space: nowrap; }
.ic-base { width: 21px; height: 23px; }
.g-box { display: flex; align-items: center; height: 45px; border: 1px solid #dde0ee; border-radius: 6px; }
.g-fit { width: 140px; margin-right: 10px; }
.g-cal { width: 49px; height: 100%; border-right: 1px solid #dde0ee; display: flex; align-items: center; justify-content: center; }
.g-fit-t { padding-left: 12px; white-space: nowrap; }
.g-zoom { display: flex; align-items: center; width: 222px; height: 45px; }
.g-weeks { width: 135px; height: 46px; border: 1px solid #c9cde0; border-radius: 6px; display: flex; align-items: center; justify-content: space-between; padding: 0 14px; }
.ic-wchev { width: 16px; height: 16px; stroke-width: 1.600; }
.g-pm { flex: 1; height: 45px; border: 1px solid #dde0ee; border-left: 0; border-radius: 0 6px 6px 0; display: flex; align-items: center; justify-content: space-around; font-size: 26px; font-weight: 300; }
.g-live { display: flex; align-items: center; gap: 12px; margin: 0 26px 0 36px; color: #676879; }
.g-live i { width: 10px; height: 10px; border-radius: 50%; background: #00c875; box-shadow: 0 0 0 5px #b5f0d4; margin-left: 5px; }
.g-body { flex: 1; display: flex; position: relative; min-height: 0; overflow: hidden; }
.g-left { width: 560px; flex: none; border-right: 1.500px solid #e6e9f3; font-size: 18px; color: #40424f; }
.g-left-head { height: 86px; display: flex; align-items: center; justify-content: space-between; padding: 0 10px 0 21px; border-bottom: 3px solid #eceef5; margin-right: -1px; }
.g-collapse { width: 24px; height: 24px; border-radius: 5px; background: #dfe0e3; display: flex; align-items: center; justify-content: center; margin-top: 2px; }
.g-collapse svg { width: 11px; height: 18px; fill: none; stroke: #50525f; stroke-width: 1.300; }
.g-back { width: 36px; height: 36px; border-radius: 50%; border: 1px solid #d5d9ea; background: #fff; display: flex; align-items: center; justify-content: center; }
.g-back svg { width: 12px; height: 20px; fill: none; stroke: #323338; stroke-width: 1.400; }
.g-parent { display: flex; align-items: center; height: 62px; padding-left: 65px; white-space: nowrap; }
.g-parent i { width: 10px; height: 12px; border-radius: 50%; background: #7a4ecf; margin-right: 17px; flex: none; }
.g-balloon { margin-right: 7px; }
.g-item { display: grid; grid-template-columns: 245px 1fr; height: 49px; align-items: center; padding-left: 69px; white-space: nowrap; }
.g-parent + .g-item { margin-top: 5px; }
.g-right { flex: 1; min-width: 0; overflow: hidden; }
.g-months { height: 43px; display: grid; grid-template-columns: 132px 972px 1006px 970px; border-bottom: 1.500px solid #dde0ee; font-size: 18px; color: #50525f; }
.g-months span { display: flex; align-items: center; justify-content: center; border-right: 1px solid #dde0ee; gap: 5px; white-space: nowrap; }
.g-months b { font-weight: 700; }
.g-weeks-row { height: 43px; display: grid; grid-template-columns: 100px repeat(12, 226.700px); font-size: 15px; color: #323338; border-bottom: 3px solid #eceef5; }
.g-weeks-row span { display: flex; align-items: center; justify-content: center; border-right: 1px solid #dde0ee; white-space: nowrap; }
.g-weeks-row .w-first { justify-content: flex-start; padding-left: 2px; font-size: 17px; }
.w-now em { width: 203px; height: 25px; border-radius: 13px; background: #0073ea; color: #fff; display: flex; align-items: center; justify-content: center; }
.g-rows { height: 220px; background-image: linear-gradient(to right, #dfe2f0 0, #dfe2f0 1.500px, transparent 1.500px); background-size: 226.700px 100%; background-position: 100px 0; }
.r-sum { height: 57px; display: flex; flex-direction: column; justify-content: flex-end; }
.r-sum-label { display: flex; align-items: center; padding-left: 30px; font-size: 16px; color: #8b8d9a; white-space: pre; height: 22px; }
.r-sum-label .tt-balloon { width: 13px; height: 18px; margin-right: 6px; }
.r-sum-label b { font-weight: 700; color: #323338; }
.r-sum-bar { height: 6px; background: #7a4ecf; margin-top: 0; }
.r-task { display: flex; align-items: center; margin-top: 18px; height: 28px; }
.bar { background: #7a4ecf; }
.bar-a { width: 125px; height: 28px; border-radius: 0 5px 5px 0; flex: none; }
.bar-label { margin-left: 10px; display: flex; align-items: center; font-size: 18.200px; color: #676879; white-space: pre; margin-top: 2px; }
.bar-label .tt-balloon { margin: 0 3px 0 4px; }
.bar-b { height: 27px; margin-left: 137px; margin-top: 21px; border-radius: 5px 0 0 5px; }
.bar-c { height: 26px; margin-left: 137px; margin-top: 22px; border-radius: 5px 0 0 5px; }
.g-scroll { position: absolute; right: 0; top: 0; bottom: 0; width: 10px; background: rgba(50,51,70,.85); border-radius: 5px 5px 0 0; }
.page-scroll { position: absolute; right: 0; top: 56px; width: 5px; height: 1347px; background: #a3a3a3; }
```
